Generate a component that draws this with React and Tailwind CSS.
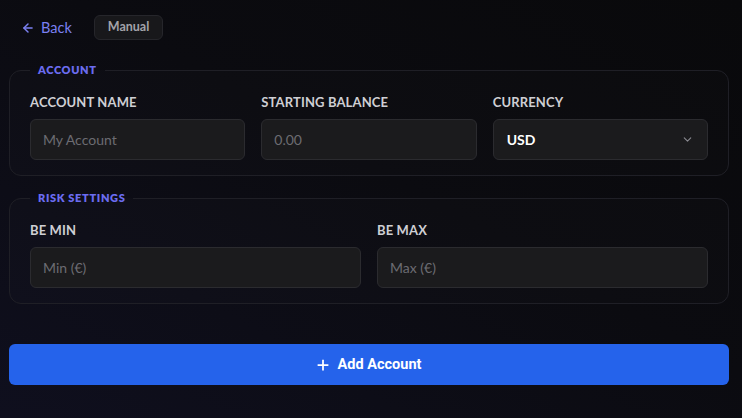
import React from "react";

const labelFont = { fontFamily: "Lato, 'Noto Sans', sans-serif" };

const Field = ({ label, placeholder }) => (
  <div className="flex flex-col gap-[7px]">
    <label className="text-[13px] font-bold text-[#cfcfd4] leading-5 tracking-[0.01em]">{label}</label>
    <input
      placeholder={placeholder}
      className="h-[41px] w-full rounded-md border border-[#2b2b2f] bg-[#1b1b1d] px-3 text-[14px] text-white placeholder:text-[#6c6c72] outline-none"
      style={labelFont}
    />
  </div>
);

const Section = ({ title, children }) => (
  <fieldset className="rounded-xl border border-[#1f1f26] bg-white/[0.012] px-5 pt-[14px] pb-[15px]">
    <legend className="ml-0 px-2 text-[11px] font-extrabold tracking-[0.06em] text-[#6b6cf0] leading-4">
      {title}
    </legend>
    {children}
  </fieldset>
);

const App = () => {
  return (
    <div
      className="min-h-[418px] w-full bg-[linear-gradient(to_top_right,#0f0f1e,#0b0b10_55%,#09090b)] pl-[9px] pr-[13px] pt-[15px]"
      style={labelFont}
    >
      <div className="flex items-center gap-[22px] pl-[12px]">
        <button className="flex items-center gap-[6px] text-[14.5px] text-[#7b80f2]">
          <svg width="14" height="14" viewBox="0 0 24 24" fill="none" stroke="currentColor" strokeWidth="2.5" strokeLinecap="round" strokeLinejoin="round">
            <path d="M19 12H5" />
            <path d="M12 19l-7-7 7-7" />
          </svg>
          Back
        </button>
        <span className="flex h-[25px] items-center rounded-md border border-[#26262b] bg-[#18181b] px-[13px] text-[12.5px] font-bold text-[#a3a3aa]">
          Manual
        </span>
      </div>

      <div className="mt-[22px] flex flex-col gap-[14px]">
        <Section title="ACCOUNT">
          <div className="grid grid-cols-3 gap-4">
            <Field label="ACCOUNT NAME" placeholder="My Account" />
            <Field label="STARTING BALANCE" placeholder="0.00" />
            <div className="flex flex-col gap-[7px]">
              <label className="text-[13px] font-bold text-[#cfcfd4] leading-5 tracking-[0.01em]">CURRENCY</label>
              <div className="flex h-[41px] items-center justify-between rounded-md border border-[#2b2b2f] bg-[#1b1b1d] pl-[13px] pr-[13px]">
                <span className="text-[14px] font-bold text-white">USD</span>
                <svg width="13" height="13" viewBox="0 0 24 24" fill="none" stroke="#8a8a90" strokeWidth="2" strokeLinecap="round" strokeLinejoin="round">
                  <path d="M6 9l6 6 6-6" />
                </svg>
              </div>
            </div>
          </div>
        </Section>

        <Section title="RISK SETTINGS">
          <div className="grid grid-cols-2 gap-4">
            <Field label="BE MIN" placeholder="Min (€)" />
            <Field label="BE MAX" placeholder="Max (€)" />
          </div>
        </Section>
      </div>

      <button
        className="mt-[40px] flex h-[41px] w-full items-center justify-center gap-[9px] rounded-md bg-[#2563eb] text-[14.5px] font-bold text-white"
        style={{ fontFamily: "Roboto, 'Liberation Sans', sans-serif" }}
      >
        <svg width="12" height="12" viewBox="0 0 24 24" fill="none" stroke="currentColor" strokeWidth="3.5" strokeLinecap="square">
          <path d="M12 3v18M3 12h18" />
        </svg>
        Add Account
      </button>
    </div>
  );
};

export default App;
